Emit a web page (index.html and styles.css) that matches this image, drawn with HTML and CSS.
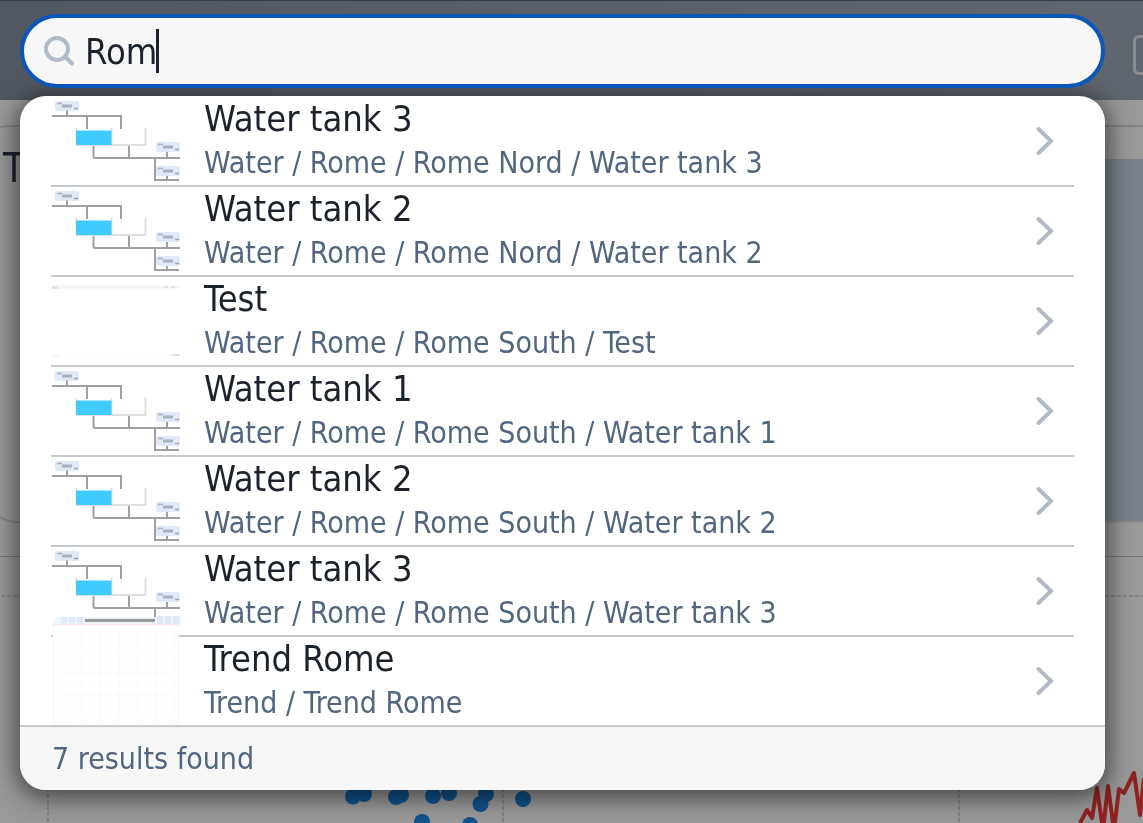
FILE: index.html
```html
<!DOCTYPE html>
<html lang="en">
<head>
<meta charset="utf-8">
<title>Search</title>
<link rel="stylesheet" href="styles.css">
</head>
<body>
<svg class="defs" width="0" height="0" aria-hidden="true">
  <defs>
    <filter id="soft" x="-5%" y="-5%" width="110%" height="110%"><feGaussianBlur stdDeviation="0.7"/></filter>
    <symbol id="label" viewBox="0 0 24 10">
      <rect width="24" height="10" rx="2" fill="#e1e9f6"/>
      <path d="M2 2.5h5" stroke="#a8afbc" stroke-width="1.5"/>
      <path d="M7 5h10" stroke="#a9b0be" stroke-width="3"/>
      <path d="M19 7.5h4" stroke="#9da4b0" stroke-width="1.5"/>
    </symbol>
    <symbol id="tank" viewBox="0 0 128 80">
      <g filter="url(#soft)" fill="none">
        <use href="#label" x="3" y="0" width="24" height="10"/>
        <use href="#label" x="104" y="41" width="24" height="10"/>
        <use href="#label" x="104" y="65" width="24" height="10"/>
        <g stroke="#a0a0a0" stroke-width="2">
          <path d="M0 15H69V28M15 9.500V15M35 16V28"/>
          <path d="M41.500 44V55.500Q41.500 57 43 57H128M77 45V57M115 51V57M103 57V79H127M115 75V79"/>
        </g>
        <path d="M24.500 27V44H93.500V27M59.500 27V44" stroke="#dedede" stroke-width="1.800"/>
      </g>
      <rect x="24" y="29.500" width="35.500" height="14.500" fill="#40cbff"/>
    </symbol>
    <symbol id="blank" viewBox="0 0 128 80">
      <g filter="url(#soft)">
        <path d="M0 6h128" stroke="#f3f4f4" stroke-width="3"/>
        <path d="M0 6.500h6" stroke="#dfe5ea" stroke-width="3"/>
        <path d="M112 6h4M119 6h4" stroke="#e0e0e3" stroke-width="2"/>
        <path d="M1 74.500h7" stroke="#f1f1f1" stroke-width="2"/>
        <path d="M8 74h110" stroke="#fafafa" stroke-width="1"/>
        <path d="M119 74h9" stroke="#e2e2e2" stroke-width="2"/>
      </g>
    </symbol>
    <symbol id="trend" viewBox="0 0 126 108">
      <path d="M0 108V7Q1 0 9 0H126V108z" fill="#fefefe"/>
      <path d="M0 7Q1 0 9 0H126V7z" fill="#f1f4f9"/>
      <path d="M8 3.500H31M104 3.500H126" stroke="#dfe9f7" stroke-width="7" stroke-dasharray="6 2"/>
      <path d="M32 3.500H102" stroke="#969b9d" stroke-width="3"/>
      <path d="M0 7.500H126" stroke="#f9e6e4" stroke-width="1.500"/>
      <path d="M11 13V108M47.500 13V108M66 13V108M85 13V108M103 13V108M29 13V108M121 13V108M11 34H121M11 56H121M11 78H121M11 100H121" stroke="#f8f8f9" fill="none"/>
      <path d="M.500 8V108M125.500 8V108" stroke="#f8f6f7"/>
    </symbol>
    <symbol id="chevron" viewBox="0 0 18 30">
      <path d="M2.500 3L15 15L2.500 27" fill="none" stroke="#b2bac6" stroke-width="4" stroke-linecap="round" stroke-linejoin="miter"/>
    </symbol>
  </defs>
</svg>

<div class="backdrop" aria-hidden="true">
  <div class="topbar"><span class="topbar-box"></span></div>
  <div class="scene">
    <svg class="scene-art" width="1143" height="723" viewBox="0 100 1143 723">
      <path d="M0 127Q6 126 20 126H1143M0 517Q8 522 20 522" fill="none" stroke="#848484" stroke-width="2"/>
      <rect x="1095" y="159" width="48" height="362" fill="#7a828d"/>
      <path d="M1095 522H1143" stroke="#828282" stroke-width="1"/>
      <path d="M0 556.500H1143" stroke="#777"/>
      <path d="M1 596H1143M48 596V823M503 596V823M959 596V823" fill="none" stroke="#828282" stroke-width="2" stroke-dasharray="4 2"/>
      <g fill="#115289">
        <circle cx="353" cy="796.500" r="8"/><circle cx="364" cy="794" r="8"/>
        <circle cx="396" cy="797" r="8"/><circle cx="401" cy="795" r="8"/>
        <circle cx="433" cy="796" r="8"/><circle cx="449" cy="793" r="8"/>
        <circle cx="486" cy="794" r="8"/><circle cx="480.500" cy="804" r="8"/>
        <circle cx="523" cy="799" r="8"/><circle cx="422" cy="822" r="8"/>
        <circle cx="470" cy="825" r="8"/>
      </g>
      <path d="M1080 823L1087 810L1092 818L1097 788L1103 830L1108 786L1114 830L1119 789L1124 793L1134 773L1140 815L1144 778" fill="none" stroke="#8f2222" stroke-width="4" stroke-linejoin="round"/>
    </svg>
    <span class="scene-title">T</span>
  </div>
</div>

<main class="search">
  <form class="search-box" role="search">
    <svg class="search-icon" viewBox="0 0 32 32" aria-hidden="true">
      <circle cx="13" cy="14" r="11" fill="none" stroke="#b2bcc8" stroke-width="4"/>
      <path d="M21.500 22L28 28.500" stroke="#b2bcc8" stroke-width="4" stroke-linecap="round"/>
    </svg>
    <span class="field">
      <input class="search-input" type="text" value="Rom" aria-label="Search">
      <span class="caret"></span>
    </span>
  </form>

  <section class="panel">
    <ul class="results">
      <li><a class="result" href="#"><svg class="thumb"><use href="#tank"/></svg><span class="text"><span class="title">Water tank 3</span><span class="path">Water / Rome / Rome Nord / Water tank 3</span></span><svg class="chevron"><use href="#chevron"/></svg></a></li>
      <li><a class="result" href="#"><svg class="thumb"><use href="#tank"/></svg><span class="text"><span class="title">Water tank 2</span><span class="path">Water / Rome / Rome Nord / Water tank 2</span></span><svg class="chevron"><use href="#chevron"/></svg></a></li>
      <li><a class="result" href="#"><svg class="thumb"><use href="#blank"/></svg><span class="text"><span class="title">Test</span><span class="path">Water / Rome / Rome South / Test</span></span><svg class="chevron"><use href="#chevron"/></svg></a></li>
      <li><a class="result" href="#"><svg class="thumb"><use href="#tank"/></svg><span class="text"><span class="title">Water tank 1</span><span class="path">Water / Rome / Rome South / Water tank 1</span></span><svg class="chevron"><use href="#chevron"/></svg></a></li>
      <li><a class="result" href="#"><svg class="thumb"><use href="#tank"/></svg><span class="text"><span class="title">Water tank 2</span><span class="path">Water / Rome / Rome South / Water tank 2</span></span><svg class="chevron"><use href="#chevron"/></svg></a></li>
      <li><a class="result" href="#"><svg class="thumb"><use href="#tank"/></svg><span class="text"><span class="title">Water tank 3</span><span class="path">Water / Rome / Rome South / Water tank 3</span></span><svg class="chevron"><use href="#chevron"/></svg></a></li>
      <li><a class="result" href="#"><svg class="thumb thumb-tall"><use href="#trend"/></svg><span class="text"><span class="title">Trend Rome</span><span class="path">Trend / Trend Rome</span></span><svg class="chevron"><use href="#chevron"/></svg></a></li>
    </ul>
    <p class="count">7 results found</p>
  </section>
</main>
</body>
</html>
```

FILE: styles.css
```css
* { box-sizing: border-box; }

body {
  margin: 0;
  background: #999;
  color: #1b222c;
  font-family: Tahoma, "DejaVu Sans Condensed", "Noto Sans", sans-serif;
  font-size: 30px;
}

.defs { position: absolute; }

/* Dimmed page behind the search overlay */
.backdrop {
  position: fixed;
  inset: 0;
  display: flex;
  flex-direction: column;
  overflow: hidden;
}

.topbar {
  display: flex;
  justify-content: flex-end;
  align-items: center;
  flex: none;
  height: 100px;
  border-top: 1px solid #333f50;
  background: linear-gradient(90deg, #525862, #60666f);
}

.topbar-box {
  width: 40px;
  height: 40px;
  margin: 8px -30px 0 0;
  border: 3px solid #8a8c90;
  border-radius: 6px;
}

.scene { position: relative; flex: 1; }
.scene-art { display: block; }

.scene-title {
  position: absolute;
  left: 3px;
  top: 46px;
  font-size: 40px;
  line-height: 44px;
}

/* Search overlay */
.search {
  position: relative;
  display: flex;
  flex-direction: column;
  gap: 8px;
  padding: 14px 38px 32px 20px;
}

.search-box {
  z-index: 1;
  display: flex;
  align-items: center;
  gap: 9px;
  height: 74px;
  padding: 0 32px 0 20px;
  border: 4px solid #0a57b7;
  border-radius: 37px;
  background: #f7f7f7;
}

.search-icon { flex: none; width: 32px; height: 32px; }

.field { position: relative; flex: 1; }

.search-input {
  display: block;
  width: 100%;
  height: 44px;
  padding: 0;
  border: 0;
  outline: 0;
  background: none;
  color: inherit;
  font: inherit;
  font-size: 36px;
}

.caret {
  position: absolute;
  left: 71px;
  top: 0;
  width: 3px;
  height: 44px;
  background: #1b222c;
}

.panel {
  overflow: hidden;
  border-radius: 26px;
  background: #fff;
  box-shadow: 0 4px 24px 4px rgba(0, 0, 0, .55);
}

.results {
  margin: 0;
  padding: 1px 31px 0;
  list-style: none;
}

.result {
  display: flex;
  align-items: center;
  height: 90px;
  padding: 0 20px 0 1px;
  border-bottom: 2px solid #c4c8cf;
  color: inherit;
  text-decoration: none;
}

li:last-child .result { height: 88px; border-bottom: 0; }

.thumb { flex: none; width: 128px; height: 80px; }

.thumb-tall {
  align-self: flex-end;
  position: relative;
  height: 108px;
}

.text {
  display: flex;
  flex: 1;
  flex-direction: column;
  min-width: 0;
  padding-left: 24px;
}

.title { font-size: 36px; line-height: 44px; }
.path { color: #52667f; line-height: 44px; }

.chevron { flex: none; width: 18px; height: 30px; }

.count {
  margin: 0;
  padding: 10px 32px 9px;
  border-top: 2px solid #c4c8cf;
  background: #f7f7f7;
  color: #52667f;
  line-height: 44px;
}
```
